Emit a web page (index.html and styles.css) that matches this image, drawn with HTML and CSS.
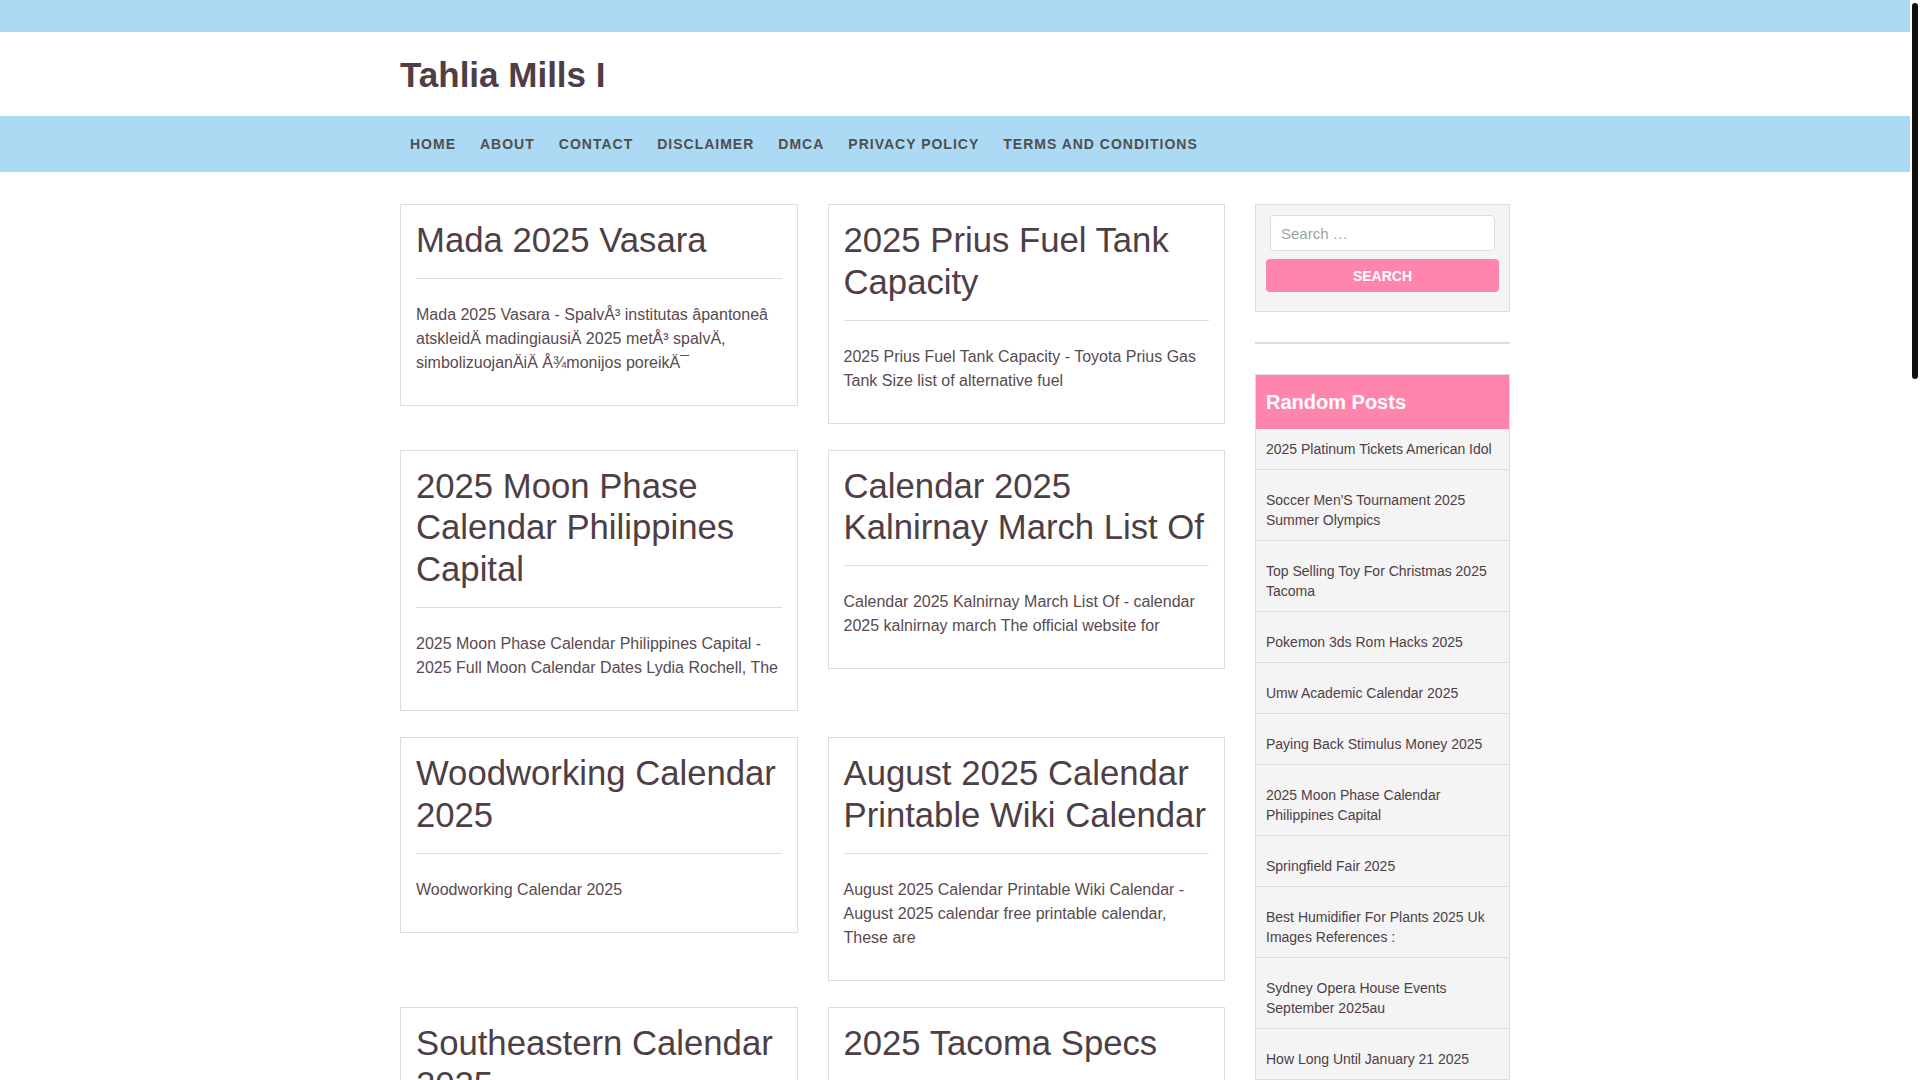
FILE: index.html
```html
<!DOCTYPE html>
<html lang="en">
<head>
<meta charset="utf-8">
<title>Tahlia Mills I</title>
<link rel="stylesheet" href="styles.css">
</head>
<body>
<div class="topbar"></div>
<header class="site-header">
  <div class="container">
    <h1 class="site-title">Tahlia Mills I</h1>
  </div>
</header>
<nav class="main-nav">
  <div class="container">
    <ul class="menu">
      <li><a href="#">Home</a></li>
      <li><a href="#">About</a></li>
      <li><a href="#">Contact</a></li>
      <li><a href="#">Disclaimer</a></li>
      <li><a href="#">DMCA</a></li>
      <li><a href="#">Privacy Policy</a></li>
      <li><a href="#">Terms and Conditions</a></li>
    </ul>
  </div>
</nav>

<div class="container content">
  <main class="posts">
    <article class="card">
      <h2 class="card-title">Mada 2025 Vasara</h2>
      <hr class="card-rule">
      <p class="card-text">Mada 2025 Vasara - SpalvÅ³ institutas âpantoneâ atskleidÄ madingiausiÄ 2025 metÅ³ spalvÄ, simbolizuojanÄiÄ Å¾monijos poreikÄ¯</p>
    </article>
    <article class="card">
      <h2 class="card-title">2025 Prius Fuel Tank Capacity</h2>
      <hr class="card-rule">
      <p class="card-text">2025 Prius Fuel Tank Capacity - Toyota Prius Gas Tank Size list of alternative fuel</p>
    </article>
    <article class="card">
      <h2 class="card-title">2025 Moon Phase Calendar Philippines Capital</h2>
      <hr class="card-rule">
      <p class="card-text">2025 Moon Phase Calendar Philippines Capital - 2025 Full Moon Calendar Dates Lydia Rochell, The</p>
    </article>
    <article class="card">
      <h2 class="card-title">Calendar 2025 Kalnirnay March List Of</h2>
      <hr class="card-rule">
      <p class="card-text">Calendar 2025 Kalnirnay March List Of - calendar 2025 kalnirnay march The official website for</p>
    </article>
    <article class="card">
      <h2 class="card-title">Woodworking Calendar 2025</h2>
      <hr class="card-rule">
      <p class="card-text">Woodworking Calendar 2025</p>
    </article>
    <article class="card">
      <h2 class="card-title">August 2025 Calendar Printable Wiki Calendar</h2>
      <hr class="card-rule">
      <p class="card-text">August 2025 Calendar Printable Wiki Calendar - August 2025 calendar free printable calendar, These are</p>
    </article>
    <article class="card">
      <h2 class="card-title">Southeastern Calendar 2025</h2>
      <hr class="card-rule">
      <p class="card-text">Southeastern Calendar 2025 - Southeastern academic calendar 2025 dates and events</p>
    </article>
    <article class="card">
      <h2 class="card-title">2025 Tacoma Specs</h2>
      <hr class="card-rule">
      <p class="card-text">2025 Tacoma Specs - 2025 Toyota Tacoma specs, engine, towing and trim levels</p>
    </article>
    <article class="card">
      <h2 class="card-title">Pokemon 3ds Rom Hacks 2025</h2>
      <hr class="card-rule">
      <p class="card-text">Pokemon 3ds Rom Hacks 2025 - list of the best pokemon 3ds rom hacks</p>
    </article>
    <article class="card">
      <h2 class="card-title">Umw Academic Calendar 2025</h2>
      <hr class="card-rule">
      <p class="card-text">Umw Academic Calendar 2025 - academic calendar dates and deadlines</p>
    </article>
    <article class="card">
      <h2 class="card-title">Paying Back Stimulus Money 2025</h2>
      <hr class="card-rule">
      <p class="card-text">Paying Back Stimulus Money 2025 - what to know about paying back stimulus</p>
    </article>
    <article class="card">
      <h2 class="card-title">Springfield Fair 2025</h2>
      <hr class="card-rule">
      <p class="card-text">Springfield Fair 2025 - dates, tickets and events at the Springfield Fair</p>
    </article>
  </main>

  <aside class="sidebar">
    <section class="widget search-widget">
      <form class="search-form">
        <input class="search-field" type="search" placeholder="Search …">
        <button class="search-submit" type="button">Search</button>
      </form>
    </section>
    <div class="widget-sep"></div>
    <section class="widget posts-widget">
      <h3 class="widget-title">Random Posts</h3>
      <ul class="post-list">
        <li><a href="#">2025 Platinum Tickets American Idol</a></li>
        <li><a href="#">Soccer Men'S Tournament 2025 Summer Olympics</a></li>
        <li><a href="#">Top Selling Toy For Christmas 2025 Tacoma</a></li>
        <li><a href="#">Pokemon 3ds Rom Hacks 2025</a></li>
        <li><a href="#">Umw Academic Calendar 2025</a></li>
        <li><a href="#">Paying Back Stimulus Money 2025</a></li>
        <li><a href="#">2025 Moon Phase Calendar Philippines Capital</a></li>
        <li><a href="#">Springfield Fair 2025</a></li>
        <li><a href="#">Best Humidifier For Plants 2025 Uk Images References :</a></li>
        <li><a href="#">Sydney Opera House Events September 2025au</a></li>
        <li><a href="#">How Long Until January 21 2025</a></li>
        <li><a href="#">Woodworking Calendar 2025</a></li>
        <li><a href="#">2025 Tacoma Specs</a></li>
      </ul>
    </section>
  </aside>
</div>

<footer class="site-footer">
  <div class="container">
    <p class="copyright">Copyright © 2025 Tahlia Mills I</p>
  </div>
</footer>

<div class="scrollbar" aria-hidden="true"><div class="scrollbar-thumb"></div></div>
</body>
</html>
```

FILE: styles.css
```css
html, body {
  margin: 0;
  padding: 0;
}

body {
  font-family: "Liberation Sans", Arial, sans-serif;
  font-size: 16px;
  color: #5a4a50;
  background: #ffffff;
  padding-right: 10px;
}

a {
  text-decoration: none;
  color: inherit;
}

.scrollbar {
  position: fixed;
  top: 0;
  right: 0;
  width: 10px;
  height: 100vh;
  background: #ffffff;
}

.scrollbar-thumb {
  margin: 3px 2px 0;
  height: 376px;
  background: #111111;
  border-radius: 3px;
}

.container {
  width: 1110px;
  margin: 0 auto;
}

.topbar {
  height: 32px;
  background: #acd9f4;
}

.site-header {
  background: #ffffff;
  padding: 22px 0 21px;
}

.site-title {
  margin: 0;
  font-size: 35px;
  line-height: 41px;
  font-weight: bold;
  color: #4e3e45;
}

.main-nav {
  background: #acd9f4;
}

.menu {
  list-style: none;
  margin: 0 0 0 -2px;
  padding: 0;
  display: flex;
}

.menu a {
  display: block;
  padding: 0 12px;
  line-height: 56px;
  font-size: 14px;
  font-weight: bold;
  letter-spacing: 1px;
  text-transform: uppercase;
  color: #4f4f4f;
}

.content {
  display: grid;
  grid-template-columns: 825px 255px;
  column-gap: 30px;
  align-items: start;
  padding-top: 32px;
  padding-bottom: 60px;
}

.posts {
  display: grid;
  grid-template-columns: 1fr 1fr;
  column-gap: 30px;
  row-gap: 26px;
  align-items: start;
}

.card {
  border: 1px solid #dddddd;
  padding: 15px;
  background: #ffffff;
}

.card-title {
  margin: 0 -4px 16px 0;
  font-size: 34.7px;
  line-height: 41.8px;
  font-weight: normal;
  color: #4e3e45;
}

.card-rule {
  border: 0;
  border-top: 1px solid #dddddd;
  margin: 0;
  height: 0;
}

.card-text {
  margin: 24px 0 15px;
  font-size: 16px;
  line-height: 24px;
  color: #5a4a50;
}

.search-widget {
  background: #f4f4f4;
  border: 1px solid #dddddd;
  padding: 10px 10px 19px;
  margin-bottom: 30px;
}

.search-form {
  margin: 0;
}

.search-field {
  display: block;
  box-sizing: border-box;
  width: calc(100% - 8px);
  height: 36px;
  margin: 0 4px;
  padding: 0 10px;
  border: 1px solid #dddddd;
  border-radius: 4px;
  background: #ffffff;
  font-family: "Liberation Sans", Arial, sans-serif;
  font-size: 15px;
  color: #4e3e45;
  outline: none;
}

.search-field::placeholder {
  color: #9aa5a6;
}

.search-submit {
  display: block;
  width: 100%;
  height: 33px;
  margin-top: 8px;
  border: 0;
  border-radius: 4px;
  background: #ff85ad;
  color: #ffffff;
  font-family: "Liberation Sans", Arial, sans-serif;
  font-size: 14px;
  font-weight: bold;
  text-transform: uppercase;
  padding: 0;
}

.widget-sep {
  border-top: 2px solid #dddddd;
  margin-bottom: 30px;
}

.posts-widget {
  border: 1px solid #dddddd;
  background: #f4f4f4;
}

.widget-title {
  margin: 0;
  padding: 15px 10px;
  background: #ff85ad;
  color: #ffffff;
  font-size: 20px;
  line-height: 24px;
  font-weight: bold;
}

.post-list {
  list-style: none;
  margin: 0;
  padding: 0;
}

.post-list li {
  padding: 10px;
  border-bottom: 1px solid #dddddd;
  font-size: 14px;
  line-height: 20px;
  color: #4e3e45;
}

.post-list li + li {
  padding-top: 20px;
}

.post-list li:last-child {
  border-bottom: 0;
}

.site-footer {
  background: #acd9f4;
  padding: 20px 0;
}

.copyright {
  margin: 0;
  font-size: 14px;
  color: #4f4f4f;
  text-align: center;
}
```
